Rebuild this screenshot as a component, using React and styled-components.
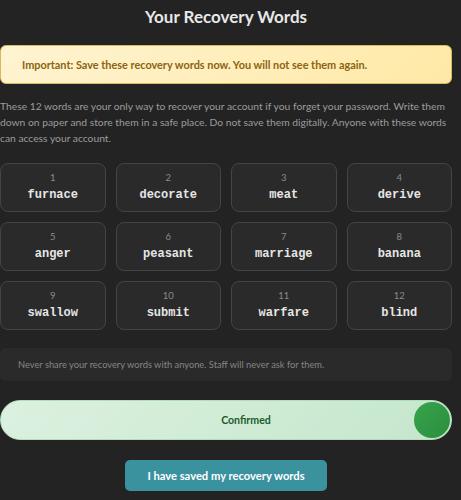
import React from 'react'
import styled, { createGlobalStyle } from 'styled-components'

const GlobalStyle = createGlobalStyle`
  body {
    margin: 0;
    background: #232323;
    font-family: Lato, "Noto Sans", sans-serif;
  }
`

const words = [
  'furnace', 'decorate', 'meat', 'derive',
  'anger', 'peasant', 'marriage', 'banana',
  'swallow', 'submit', 'warfare', 'blind',
]

export default function App() {
  return (
    <>
      <GlobalStyle />
      <Page>
        <Title>Your Recovery Words</Title>
        <Warning>Important: Save these recovery words now. You will not see them again.</Warning>
        <Intro>
          These 12 words are your only way to recover your account if you forget your password. Write them
          down on paper and store them in a safe place. Do not save them digitally. Anyone with these words
          can access your account.
        </Intro>
        <WordGrid>
          {words.map((w, i) => (
            <WordCard key={w}>
              <WordIndex>{i + 1}</WordIndex>
              <Word>{w}</Word>
            </WordCard>
          ))}
        </WordGrid>
        <Notice>Never share your recovery words with anyone. Staff will never ask for them.</Notice>
        <SlideTrack>
          <SlideLabel>Confirmed</SlideLabel>
          <SlideKnob />
        </SlideTrack>
        <Actions>
          <SaveButton>I have saved my recovery words</SaveButton>
        </Actions>
      </Page>
    </>
  )
}

const Page = styled.div`
  width: 452px;
  padding-top: 5px;
`

const Title = styled.h2`
  margin: 0 0 16px;
  text-align: center;
  font-size: 17px;
  line-height: 24px;
  font-weight: 700;
  color: #e8e8e8;
`

const Warning = styled.div`
  box-sizing: border-box;
  height: 39px;
  display: flex;
  align-items: center;
  padding: 0 21px;
  border: 1px solid #d9b95e;
  border-radius: 6px;
  background: linear-gradient(135deg, #fff4d2 0%, #ffe9a6 100%);
  color: #8a6410;
  font-size: 10.9px;
  font-weight: 700;
`

const Intro = styled.p`
  margin: 14px 0 17px;
  color: #9c9c9c;
  font-size: 10.3px;
  line-height: 16px;
`

const WordGrid = styled.div`
  display: grid;
  grid-template-columns: repeat(4, 1fr);
  gap: 10px;
`

const WordCard = styled.div`
  box-sizing: border-box;
  height: 49px;
  display: flex;
  flex-direction: column;
  align-items: center;
  justify-content: center;
  gap: 3px;
  background: #2a2a2a;
  border: 1.5px solid #444;
  border-radius: 8px;
`

const WordIndex = styled.span`
  font-size: 9.5px;
  line-height: 13px;
  color: #8a8a8a;
`

const Word = styled.span`
  font-family: "Liberation Mono", monospace;
  font-weight: 700;
  font-size: 12px;
  line-height: 17px;
  color: #e6e6e6;
`

const Notice = styled.div`
  box-sizing: border-box;
  margin-top: 18px;
  height: 33px;
  display: flex;
  align-items: center;
  padding: 0 18px;
  border-radius: 6px;
  background: #2a2a2a;
  color: #858585;
  font-size: 9.3px;
`

const SlideTrack = styled.div`
  position: relative;
  box-sizing: border-box;
  margin-top: 19px;
  height: 40px;
  padding-left: 40px;
  display: flex;
  align-items: center;
  justify-content: center;
  border: 1px solid #b3dcb9;
  border-radius: 20px;
  background: linear-gradient(135deg, #dcf1e0 0%, #c4e6cc 100%);
`

const SlideLabel = styled.span`
  color: #1d5b2b;
  font-size: 10.6px;
  font-weight: 700;
`

const SlideKnob = styled.div`
  position: absolute;
  right: 1px;
  top: 1px;
  width: 36px;
  height: 36px;
  border-radius: 50%;
  background: linear-gradient(135deg, #37a24b 0%, #2b8f3f 100%);
`

const Actions = styled.div`
  display: flex;
  justify-content: center;
  margin-top: 20px;
`

const SaveButton = styled.button`
  height: 31px;
  width: 202px;
  border: none;
  border-radius: 5px;
  background: #3a929f;
  color: #fff;
  font-family: inherit;
  font-size: 11.2px;
  font-weight: 700;
  cursor: pointer;
`
